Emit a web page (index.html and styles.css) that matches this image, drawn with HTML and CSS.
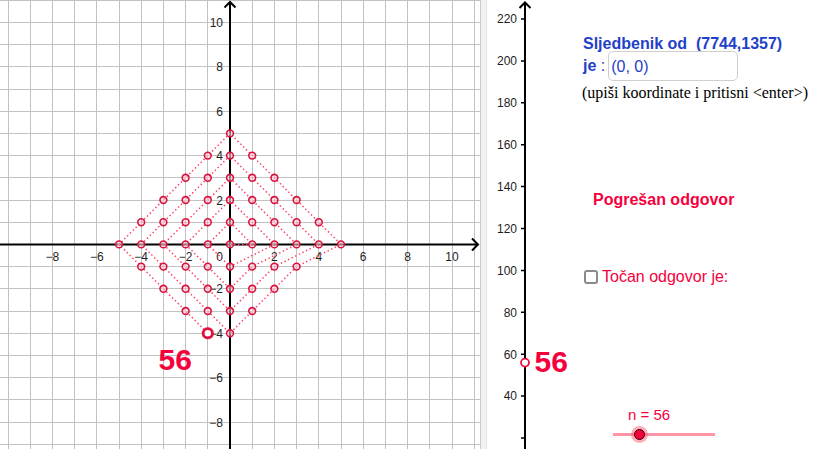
FILE: index.html
```html
<!DOCTYPE html>
<html lang="hr">
<head>
<meta charset="utf-8">
<title>Sljedbenik</title>
<link rel="stylesheet" href="styles.css">
</head>
<body>
<div class="app">
  <div class="view-left">
    <svg width="480" height="449" viewBox="0 0 480 449">
      <path class="grid" d="M8.5 0V449M30.5 0V449M52.5 0V449M74.5 0V449M96.5 0V449M119.5 0V449M141.5 0V449M163.5 0V449M185.5 0V449M207.5 0V449M252.5 0V449M274.5 0V449M296.5 0V449M318.5 0V449M341.5 0V449M363.5 0V449M385.5 0V449M407.5 0V449M429.5 0V449M452.5 0V449M474.5 0V449
      M0 0.5H480M0 22.5H480M0 44.5H480M0 66.5H480M0 89.5H480M0 111.5H480M0 133.5H480M0 155.5H480M0 177.5H480M0 200.5H480M0 222.5H480M0 266.5H480M0 288.5H480M0 311.5H480M0 333.5H480M0 355.5H480M0 377.5H480M0 399.5H480M0 422.5H480M0 444.5H480"/>
      <line class="axis" x1="0" y1="244.5" x2="477" y2="244.5"/>
      <line class="axis" x1="230" y1="2" x2="230" y2="449"/>
      <polyline class="axis" points="472,238.5 478,244.5 472,250.5"/>
      <polyline class="axis" points="224.5,7.5 230,2 235.5,7.5"/>
      <g class="tick">
        <text x="52.4" y="260.5" text-anchor="middle">−8</text>
        <text x="96.8" y="260.5" text-anchor="middle">−6</text>
        <text x="141.2" y="260.5" text-anchor="middle">−4</text>
        <text x="185.6" y="260.5" text-anchor="middle">−2</text>
        <text x="223" y="260.5" text-anchor="end">0</text>
        <text x="274.4" y="260.5" text-anchor="middle">2</text>
        <text x="318.8" y="260.5" text-anchor="middle">4</text>
        <text x="363.2" y="260.5" text-anchor="middle">6</text>
        <text x="407.6" y="260.5" text-anchor="middle">8</text>
        <text x="452" y="260.5" text-anchor="middle">10</text>
        <text x="223" y="27" text-anchor="end">10</text>
        <text x="223" y="71.3" text-anchor="end">8</text>
        <text x="223" y="115.7" text-anchor="end">6</text>
        <text x="223" y="160.1" text-anchor="end">4</text>
        <text x="223" y="204.5" text-anchor="end">2</text>
        <text x="223" y="293.3" text-anchor="end">−2</text>
        <text x="223" y="337.7" text-anchor="end">−4</text>
        <text x="223" y="382.1" text-anchor="end">−6</text>
        <text x="223" y="426.5" text-anchor="end">−8</text>
      </g>
      <polyline class="path" points="230,244.4 252.2,244.4 230,222.2 207.8,244.4 230,266.6 274.4,244.4 252.2,222.2 230,200 207.8,222.2 185.6,244.4 207.8,266.6 230,288.8 252.2,266.6 296.6,244.4 274.4,222.2 252.2,200 230,177.8 207.8,200 185.6,222.2 163.4,244.4 185.6,266.6 207.8,288.8 230,311 252.2,288.8 274.4,266.6 318.8,244.4 296.6,222.2 274.4,200 252.2,177.8 230,155.6 207.8,177.8 185.6,200 163.4,222.2 141.2,244.4 163.4,266.6 185.6,288.8 207.8,311 230,333.2 252.2,311 274.4,288.8 296.6,266.6 341,244.4 318.8,222.2 296.6,200 274.4,177.8 252.2,155.6 230,133.4 207.8,155.6 185.6,177.8 163.4,200 141.2,222.2 119,244.4 141.2,266.6 163.4,288.8 185.6,311 207.8,333.2"/>
      <g class="pts">
        <circle cx="230" cy="244.4" r="3.4"/>
        <circle cx="252.2" cy="244.4" r="3.4"/>
        <circle cx="230" cy="222.2" r="3.4"/>
        <circle cx="207.8" cy="244.4" r="3.4"/>
        <circle cx="230" cy="266.6" r="3.4"/>
        <circle cx="274.4" cy="244.4" r="3.4"/>
        <circle cx="252.2" cy="222.2" r="3.4"/>
        <circle cx="230" cy="200" r="3.4"/>
        <circle cx="207.8" cy="222.2" r="3.4"/>
        <circle cx="185.6" cy="244.4" r="3.4"/>
        <circle cx="207.8" cy="266.6" r="3.4"/>
        <circle cx="230" cy="288.8" r="3.4"/>
        <circle cx="252.2" cy="266.6" r="3.4"/>
        <circle cx="296.6" cy="244.4" r="3.4"/>
        <circle cx="274.4" cy="222.2" r="3.4"/>
        <circle cx="252.2" cy="200" r="3.4"/>
        <circle cx="230" cy="177.8" r="3.4"/>
        <circle cx="207.8" cy="200" r="3.4"/>
        <circle cx="185.6" cy="222.2" r="3.4"/>
        <circle cx="163.4" cy="244.4" r="3.4"/>
        <circle cx="185.6" cy="266.6" r="3.4"/>
        <circle cx="207.8" cy="288.8" r="3.4"/>
        <circle cx="230" cy="311" r="3.4"/>
        <circle cx="252.2" cy="288.8" r="3.4"/>
        <circle cx="274.4" cy="266.6" r="3.4"/>
        <circle cx="318.8" cy="244.4" r="3.4"/>
        <circle cx="296.6" cy="222.2" r="3.4"/>
        <circle cx="274.4" cy="200" r="3.4"/>
        <circle cx="252.2" cy="177.8" r="3.4"/>
        <circle cx="230" cy="155.6" r="3.4"/>
        <circle cx="207.8" cy="177.8" r="3.4"/>
        <circle cx="185.6" cy="200" r="3.4"/>
        <circle cx="163.4" cy="222.2" r="3.4"/>
        <circle cx="141.2" cy="244.4" r="3.4"/>
        <circle cx="163.4" cy="266.6" r="3.4"/>
        <circle cx="185.6" cy="288.8" r="3.4"/>
        <circle cx="207.8" cy="311" r="3.4"/>
        <circle cx="230" cy="333.2" r="3.4"/>
        <circle cx="252.2" cy="311" r="3.4"/>
        <circle cx="274.4" cy="288.8" r="3.4"/>
        <circle cx="296.6" cy="266.6" r="3.4"/>
        <circle cx="341" cy="244.4" r="3.4"/>
        <circle cx="318.8" cy="222.2" r="3.4"/>
        <circle cx="296.6" cy="200" r="3.4"/>
        <circle cx="274.4" cy="177.8" r="3.4"/>
        <circle cx="252.2" cy="155.6" r="3.4"/>
        <circle cx="230" cy="133.4" r="3.4"/>
        <circle cx="207.8" cy="155.6" r="3.4"/>
        <circle cx="185.6" cy="177.8" r="3.4"/>
        <circle cx="163.4" cy="200" r="3.4"/>
        <circle cx="141.2" cy="222.2" r="3.4"/>
        <circle cx="119" cy="244.4" r="3.4"/>
        <circle cx="141.2" cy="266.6" r="3.4"/>
        <circle cx="163.4" cy="288.8" r="3.4"/>
        <circle cx="185.6" cy="311" r="3.4"/>
      </g>
      <circle class="pt-current-halo" cx="207.8" cy="333.2" r="6.5"/>
      <circle class="pt-current" cx="207.8" cy="333.2" r="4.6"/>
      <text class="big-num" x="158.5" y="370">56</text>
    </svg>
  </div>
  <div class="divider"></div>
  <div class="view-right">
    <svg class="axis-layer" width="336" height="449" viewBox="0 0 336 449">
      <line class="axis" x1="38" y1="2" x2="38" y2="449"/>
      <polyline class="axis" points="32.5,8 38,2.5 43.5,8"/>
      <path class="tickmark" d="M34 19H38M34 60.9H38M34 102.8H38M34 144.7H38M34 186.6H38M34 228.5H38M34 270.4H38M34 312.3H38M34 354.2H38M34 396.1H38M34 438H38"/>
      <g class="tick">
        <text x="30" y="23.3" text-anchor="end">220</text>
        <text x="30" y="65.2" text-anchor="end">200</text>
        <text x="30" y="107.1" text-anchor="end">180</text>
        <text x="30" y="149" text-anchor="end">160</text>
        <text x="30" y="190.9" text-anchor="end">140</text>
        <text x="30" y="232.8" text-anchor="end">120</text>
        <text x="30" y="274.7" text-anchor="end">100</text>
        <text x="30" y="316.6" text-anchor="end">80</text>
        <text x="30" y="358.5" text-anchor="end">60</text>
        <text x="30" y="400.4" text-anchor="end">40</text>
      </g>
      <circle class="pt-axis" cx="38" cy="362.6" r="4"/>
      <text class="big-num" x="47.5" y="372">56</text>
    </svg>
    <div class="widgets">
      <div class="title">Sljedbenik od  (7744,1357)</div>
      <div class="answer-row">
        <span class="je"><b>je</b> :</span>
        <div class="input">(0, 0)</div>
      </div>
      <div class="note">(upiši koordinate i pritisni &lt;enter&gt;)</div>
      <div class="status">Pogrešan odgovor</div>
      <div class="check-row"><span class="box"></span><span>Točan odgovor je:</span></div>
      <div class="slider-label">n = 56</div>
      <div class="slider"><span class="knob"><span class="knob-core"></span></span></div>
    </div>
  </div>
</div>
</body>
</html>
```
FILE: styles.css
```css
* { box-sizing: border-box; }
html, body { margin: 0; padding: 0; background: #fff; }
body {
  width: 823px;
  height: 449px;
  overflow: hidden;
  font-family: "Liberation Sans", Arial, sans-serif;
}
.app { display: flex; width: 823px; height: 449px; }
.view-left { width: 480px; flex: none; overflow: hidden; }
svg { display: block; }
.grid { stroke: #c2c2c2; stroke-width: 1; fill: none; }
.axis { stroke: #000; stroke-width: 2; fill: none; }
.tickmark { stroke: #000; stroke-width: 1.5; fill: none; }
.tick text { font-family: "Liberation Sans", Arial, sans-serif; font-size: 12px; fill: #1e1e1e; }
.path { fill: none; stroke: #ff3a60; stroke-width: 1.5; stroke-dasharray: 1.4 2.6; }
.pts circle { fill: rgba(255, 210, 218, 0.55); stroke: #d8123f; stroke-width: 1.6; }
.pt-current-halo { fill: rgba(255, 60, 90, 0.25); stroke: none; }
.pt-current { fill: #fff; stroke: #e30f3d; stroke-width: 2.8; }
.pt-axis { fill: #fff; stroke: #f0103d; stroke-width: 1.8; }
.big-num { font-family: "Liberation Sans", Arial, sans-serif; font-weight: bold; font-size: 30px; fill: #f5003d; }

.divider {
  width: 7px;
  flex: none;
  background: #f2f2f2;
  border-left: 1px solid #cdcdcd;
  border-right: 1px solid #e4e4e4;
}
.view-right { flex: 1; display: grid; overflow: hidden; }
.view-right > * { grid-area: 1 / 1; }
.widgets { display: flex; flex-direction: column; align-items: flex-start; }
.title {
  margin: 36px 0 0 96px;
  font-weight: bold;
  font-size: 16px;
  line-height: 15px;
  color: #1f41c9;
  white-space: pre;
}
.answer-row {
  display: flex;
  align-items: center;
  height: 30px;
  margin-left: 96px;
  color: #1f41c9;
  font-size: 16px;
}
.je b { font-weight: bold; }
.input {
  margin-left: 3px;
  width: 130px;
  height: 30px;
  border: 1px solid #cfcfcf;
  border-radius: 5px;
  padding: 2px 0 0 2px;
  display: flex;
  align-items: center;
}
.note {
  margin: 3px 0 0 95px;
  font-family: "Liberation Serif", "Times New Roman", serif;
  font-size: 16px;
  line-height: 18px;
  color: #000;
}
.status {
  margin: 89px 0 0 106px;
  font-weight: bold;
  font-size: 16px;
  line-height: 18px;
  color: #f5003d;
}
.check-row {
  margin: 59px 0 0 97px;
  display: flex;
  align-items: center;
  gap: 4px;
  color: #f5003d;
  font-size: 16px;
  line-height: 18px;
}
.box {
  width: 14px;
  height: 14px;
  border: 2px solid #8a8a8a;
  border-radius: 3px;
}
.slider-label {
  margin: 120px 0 0 141px;
  font-size: 15px;
  line-height: 17px;
  color: #f5003d;
}
.slider {
  margin: 2px 0 0 126px;
  width: 102px;
  height: 18px;
  display: flex;
  align-items: center;
  background: linear-gradient(#ff96a6, #ff96a6) center / 100% 3px no-repeat;
}
.knob {
  margin-left: 18px;
  width: 17px;
  height: 17px;
  border-radius: 50%;
  background: rgba(255, 70, 100, 0.45);
  display: flex;
  align-items: center;
  justify-content: center;
}
.knob-core {
  width: 11px;
  height: 11px;
  border-radius: 50%;
  background: #f5003d;
  border: 1px solid #2a0008;
}
```
